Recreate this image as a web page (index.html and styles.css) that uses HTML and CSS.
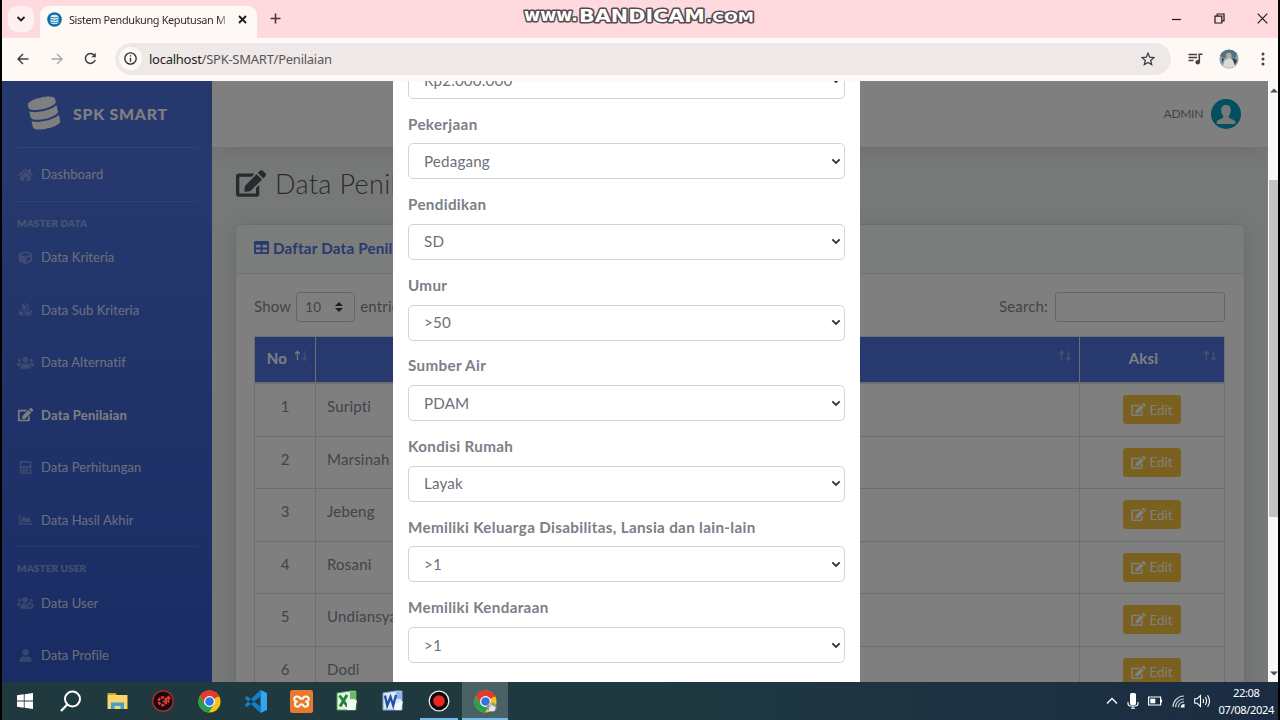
FILE: index.html
```html
<!DOCTYPE html>
<html lang="id">
<head>
<meta charset="utf-8">
<title>Sistem Pendukung Keputusan Metode SMART</title>
<link rel="stylesheet" href="styles.css">
</head>
<body>
<svg class="defs" width="0" height="0">
  <symbol id="edit" viewBox="0 0 576 512"><path d="M402.6 83.2l90.2 90.2c3.8 3.8 3.8 10 0 13.8L274.4 405.6l-92.8 10.3c-12.4 1.4-22.9-9.1-21.5-21.5l10.3-92.8L388.8 83.2c3.8-3.8 10-3.8 13.8 0zm162-22.9l-48.8-48.8c-15.2-15.2-39.9-15.2-55.2 0l-35.4 35.4c-3.8 3.8-3.8 10 0 13.8l90.2 90.2c3.8 3.8 10 3.8 13.8 0l35.4-35.4c15.2-15.3 15.2-40 0-55.2zM384 346.2V448H64V128h229.8c3.2 0 6.2-1.3 8.5-3.5l40-40c7.6-7.6 2.2-20.5-8.5-20.5H48C21.5 64 0 85.5 0 112v352c0 26.5 21.5 48 48 48h352c26.5 0 48-21.5 48-48V306.2c0-10.7-12.9-16-20.5-8.5l-40 40c-2.2 2.3-3.5 5.3-3.5 8.5z"/></symbol>
  <symbol id="database" viewBox="0 0 448 512"><path d="M448 73.143v45.714C448 159.143 347.667 192 224 192S0 159.143 0 118.857V73.143C0 32.857 100.333 0 224 0s224 32.857 224 73.143zM448 176v102.857C448 319.143 347.667 352 224 352S0 319.143 0 278.857V176c48.125 33.143 136.208 48.572 224 48.572S399.874 209.143 448 176zm0 160v102.857C448 479.143 347.667 512 224 512S0 479.143 0 438.857V336c48.125 33.143 136.208 48.572 224 48.572S399.874 369.143 448 336z"/></symbol>
  <symbol id="table" viewBox="0 0 512 512"><path d="M464 32H48C21.49 32 0 53.49 0 80v352c0 26.51 21.49 48 48 48h416c26.51 0 48-21.49 48-48V80c0-26.51-21.49-48-48-48zM224 416H64v-96h160v96zm0-160H64v-96h160v96zm224 160H288v-96h160v96zm0-160H288v-96h160v96z"/></symbol>
  <symbol id="home" viewBox="0 0 576 512"><path d="M280.37 148.26L96 300.11V464a16 16 0 0 0 16 16l112.06-.29a16 16 0 0 0 15.92-16V368a16 16 0 0 1 16-16h64a16 16 0 0 1 16 16v95.64a16 16 0 0 0 16 16.05L464 480a16 16 0 0 0 16-16V300L295.67 148.26a12.19 12.19 0 0 0-15.3 0zM571.6 251.47L488 182.56V44.05a12 12 0 0 0-12-12h-56a12 12 0 0 0-12 12v72.61L318.47 43a48 48 0 0 0-61 0L4.34 251.47a12 12 0 0 0-1.6 16.9l25.5 31A12 12 0 0 0 45.15 301l235.22-193.74a12.19 12.19 0 0 1 15.3 0L530.9 301a12 12 0 0 0 16.9-1.6l25.5-31a12 12 0 0 0-1.7-16.93z"/></symbol>
  <symbol id="cube" viewBox="0 0 512 512"><path d="M239.1 6.3l-208 78c-18.7 7-31.1 25-31.1 45v225.1c0 18.2 10.3 34.8 26.5 42.9l208 104c13.5 6.8 29.4 6.8 42.9 0l208-104c16.3-8.1 26.5-24.8 26.5-42.9V129.3c0-20-12.4-37.9-31.1-44.9l-208-78C262 2.2 250 2.2 239.1 6.3zM256 68.4l192 72v1.1l-192 78-192-78v-1.1l192-72zm32 356V275.5l160-65v133.9l-160 80z"/></symbol>
  <symbol id="cubes" viewBox="0 0 512 512"><use href="#cube" x="128" y="5" width="256" height="256"/><use href="#cube" x="0" y="240" width="256" height="256"/><use href="#cube" x="256" y="240" width="256" height="256"/></symbol>
  <symbol id="users" viewBox="0 0 640 512"><path d="M96 224c35.3 0 64-28.7 64-64s-28.7-64-64-64-64 28.7-64 64 28.7 64 64 64zm448 0c35.3 0 64-28.7 64-64s-28.7-64-64-64-64 28.7-64 64 28.7 64 64 64zm32 32h-64c-17.6 0-33.5 7.1-45.1 18.6 40.3 22.1 68.9 62 75.1 109.4h66c17.7 0 32-14.3 32-32v-32c0-35.3-28.7-64-64-64zm-256 0c61.9 0 112-50.1 112-112S381.9 32 320 32 208 82.1 208 144s50.1 112 112 112zm76.8 32h-8.3c-20.8 10-43.9 16-68.5 16s-47.6-6-68.5-16h-8.3C179.6 288 128 339.6 128 403.2V432c0 26.5 21.5 48 48 48h288c26.5 0 48-21.5 48-48v-28.8c0-63.6-51.6-115.2-115.2-115.2zm-223.7-13.4C161.5 263.1 145.6 256 128 256H64c-35.3 0-64 28.7-64 64v32c0 17.7 14.3 32 32 32h65.9c6.3-47.4 34.9-87.3 75.2-109.4z"/></symbol>
  <symbol id="users-cog" viewBox="0 0 640 512"><circle cx="96" cy="160" r="64"/><circle cx="300" cy="144" r="110"/><circle cx="544" cy="160" r="60"/><path d="M173 275C161 263 146 256 128 256H64c-35 0-64 29-64 64v32c0 18 14 32 32 32h66c6-47 35-87 75-109zM128 403c0-64 52-115 115-115h90c20 0 10 50 10 80s20 60 50 112H176c-26 0-48-21-48-48z"/><circle cx="495" cy="370" r="85" fill="none" stroke="currentColor" stroke-width="60"/><circle cx="495" cy="370" r="128" fill="none" stroke="currentColor" stroke-width="40" stroke-dasharray="67 67"/></symbol>
  <symbol id="calc" viewBox="0 0 448 512"><path fill-rule="evenodd" d="M48 0h352q48 0 48 48v416q0 48-48 48H48q-48 0-48-48V48Q0 0 48 0zM64 64v128h320V64zM64 256v64h64v-64zM192 256v64h64v-64zM320 256v192h64V256zM64 384v64h64v-64zM192 384v64h64v-64z"/></symbol>
  <symbol id="chart" viewBox="0 0 512 512"><path d="M500 384c6.6 0 12 5.4 12 12v40c0 6.600-5.400 12-12 12H12c-6.600 0-12-5.400-12-12V76c0-6.600 5.400-12 12-12h40c6.600 0 12 5.400 12 12v308h436zM372.700 159.500L288 216l-85.300-113.700c-5.100-6.800-15.500-6.300-19.900 1L96 248v104h384l-89.900-187.800c-3.200-6.500-11.400-8.700-17.400-4.700z"/></symbol>
  <symbol id="user" viewBox="0 0 448 512"><path d="M224 256c70.7 0 128-57.3 128-128S294.7 0 224 0 96 57.3 96 128s57.3 128 128 128zm89.6 32h-16.7c-22.2 10.2-46.9 16-72.9 16s-50.6-5.8-72.9-16h-16.7C60.2 288 0 348.2 0 422.4V464c0 26.5 21.5 48 48 48h352c26.5 0 48-21.5 48-48v-41.6c0-74.2-60.2-134.4-134.4-134.4z"/></symbol>
  <symbol id="sort" viewBox="0 0 14 12"><path d="M3.5 10V1.5M1.2 4L3.5 1.3 5.8 4"/><path d="M10.5 1v9M8.2 7.5l2.3 2.7 2.3-2.7"/></symbol>
  <symbol id="sort-asc" viewBox="0 0 14 12"><path d="M3.500 10V1.500M1.200 4L3.500 1.300 5.800 4"/><path opacity=".35" d="M10.500 1v9M8.200 7.500l2.300 2.700 2.300-2.700"/></symbol>
  <symbol id="caret" viewBox="0 0 10 7"><path d="M1.300 1.300L5 5l3.700-3.700" fill="none" stroke="#343438" stroke-width="1.900"/></symbol>
  <symbol id="chrome" viewBox="0 0 24 24"><circle cx="12" cy="12" r="11.5" fill="#fbc116"/><path d="M12 12L2 6.3A11.5 11.5 0 0 1 22 6.3z" fill="#e33b2e"/><path d="M2 6.3A11.5 11.5 0 0 0 11.3 23.5L17 14.5 7 14.8z" fill="#22a150"/><path d="M2 6.3L7 14.8 9 7H22.2A11.5 11.5 0 0 0 2 6.3z" fill="#e33b2e"/><circle cx="12" cy="12" r="5.7" fill="#fff"/><circle cx="12" cy="12" r="4.5" fill="#2f75e8"/></symbol>
</svg>

<div class="screen">
  <header class="tabstrip">
    <div class="tab-search"><svg width="10" height="8" viewBox="0 0 10 8"><path d="M1.5 2L5 5.5 8.5 2" fill="none" stroke="#1c1a1b" stroke-width="1.8"/></svg></div>
    <div class="tab">
      <svg width="15" height="15" viewBox="0 0 15 15"><circle cx="7.5" cy="7.5" r="7.3" fill="#0e6da8"/><path d="M3.5 4q4-2.5 8 0v7q-4 2.5-8 0z" fill="#d9eef8"/><path d="M3.5 5.2q4 1.5 8 0M3.5 7.6q4 1.5 8 0M3.5 10q4 1.5 8 0" fill="none" stroke="#0e6da8" stroke-width=".8"/></svg>
      <span class="tab-title">Sistem Pendukung Keputusan M</span>
      <svg width="9" height="9" viewBox="0 0 9 9"><path d="M1 1l7 7M8 1L1 8" stroke="#1c1a1b" stroke-width="1.8"/></svg>
    </div>
    <svg class="plus" width="11" height="11" viewBox="0 0 11 11"><path d="M5.5 .5v10M.5 5.5h10" stroke="#4a3438" stroke-width="1.6"/></svg>
    <svg class="watermark" width="240" height="28" viewBox="0 0 240 28">
      <text x="3" y="20.500" font-size="17" textLength="54" lengthAdjust="spacingAndGlyphs">www.</text>
      <text x="58" y="22" font-size="18.500" textLength="126" lengthAdjust="spacingAndGlyphs">BANDICAM</text>
      <text x="185" y="21.500" font-size="14" textLength="48" lengthAdjust="spacingAndGlyphs">.COM</text>
    </svg>
    <div class="win-controls">
      <svg width="11" height="11" viewBox="0 0 11 11"><path d="M1 6.5h9" stroke="#1c1a1b" stroke-width="1.2"/></svg>
      <svg width="11" height="11" viewBox="0 0 11 11"><path d="M1 3.2h6.8V10H1zM3.2 3V1H10v6.8H8" fill="none" stroke="#1c1a1b" stroke-width="1.2"/></svg>
      <svg width="11" height="11" viewBox="0 0 11 11"><path d="M.7 .7l9.6 9.6M10.3 .7L.7 10.3" stroke="#1c1a1b" stroke-width="1.2"/></svg>
    </div>
  </header>

  <div class="toolbar">
    <svg width="12" height="12" viewBox="0 0 12 12"><path d="M11.5 6H1.2M6 1L1 6l5 5" fill="none" stroke="#443f40" stroke-width="1.5"/></svg>
    <svg class="fwd" width="12" height="12" viewBox="0 0 12 12"><path d="M.5 6h10.3M6 1l5 5-5 5" fill="none" stroke="#aaa5a5" stroke-width="1.4"/></svg>
    <svg class="reload" width="13" height="13" viewBox="0 0 13 13"><path d="M11.2 8A5 5 0 1 1 10.3 3.2" fill="none" stroke="#443f40" stroke-width="1.5"/><path d="M11.8 .8V5.2H7.4z" fill="#443f40"/></svg>
    <div class="omnibox">
      <span class="info"><svg width="13" height="13" viewBox="0 0 13 13"><circle cx="6.5" cy="6.5" r="5.7" fill="none" stroke="#2c2829" stroke-width="1.3"/><path d="M6.5 5.7v4M6.5 3.2v1.3" stroke="#2c2829" stroke-width="1.3"/></svg></span>
      <span class="url">localhost<i>/SPK-SMART/Penilaian</i></span>
      <svg width="14" height="14" viewBox="0 0 14 14"><path d="M7 1.2l1.7 4 4.3.4-3.3 2.8 1 4.2L7 10.4l-3.7 2.2 1-4.2L1 5.6l4.300-.4z" fill="none" stroke="#443f40" stroke-width="1.3"/></svg>
    </div>
    <svg class="music" width="15" height="12" viewBox="0 0 15 12"><path d="M.5 1.5h8.500M.5 4.500h8.500M.5 7.500h5M11.300 9.500V1.300H14.500" fill="none" stroke="#443f40" stroke-width="1.600"/><circle cx="9.700" cy="9.300" r="2.200" fill="#443f40"/></svg>
    <svg class="avatar" width="20" height="20" viewBox="0 0 20 20"><circle cx="10" cy="10" r="9.600" fill="#8aa1a5"/><path d="M1 7a9.600 9.600 0 0 1 17-2l-2 5-5-3-6 2z" fill="#50757f"/><path d="M4 17l2-6 4-2 4 2 2 6q-6 4-12 0z" fill="#dadbd8"/><circle cx="9.800" cy="6.500" r="2.800" fill="#b9a79d"/><path d="M13 9l5 2-2 5zM3 9l2 1-2 4z" fill="#303c42"/></svg>
    <svg class="dots" width="4" height="14" viewBox="0 0 4 14"><circle cx="2" cy="2" r="1.5"/><circle cx="2" cy="7" r="1.5"/><circle cx="2" cy="12" r="1.5"/></svg>
  </div>

  <div class="viewport">
    <div class="app">
      <nav class="sidebar">
        <div class="brand"><svg class="logo" width="30" height="32"><use href="#database"/></svg><b>SPK SMART</b></div>
        <hr>
        <a class="item"><svg><use href="#home"/></svg>Dashboard</a>
        <hr>
        <div class="heading">MASTER DATA</div>
        <a class="item"><svg><use href="#cube"/></svg>Data Kriteria</a>
        <a class="item"><svg><use href="#cubes"/></svg>Data Sub Kriteria</a>
        <a class="item"><svg><use href="#users"/></svg>Data Alternatif</a>
        <a class="item active"><svg><use href="#edit"/></svg>Data Penilaian</a>
        <a class="item"><svg><use href="#calc"/></svg>Data Perhitungan</a>
        <a class="item"><svg><use href="#chart"/></svg>Data Hasil Akhir</a>
        <hr>
        <div class="heading">MASTER USER</div>
        <a class="item"><svg><use href="#users-cog"/></svg>Data User</a>
        <a class="item"><svg><use href="#user"/></svg>Data Profile</a>
        <hr>
      </nav>
      <div class="content">
        <div class="topbar"><span>ADMIN</span>
          <svg width="30" height="30" viewBox="0 0 30 30"><circle cx="15" cy="15" r="15" fill="#02a0c2"/><path d="M15 6c3.3 0 5 2.2 4.8 5.5-.1 2.600-.9 4.400-2.100 5.500 0 1.600.5 2.200 2 2.800 2.600 1 4.800 1.600 4.800 3.700 0 1-.5 1.400-1.500 1.400H7c-1 0-1.500-.4-1.500-1.400 0-2.100 2.200-2.700 4.800-3.700 1.500-.6 2-1.200 2-2.800-1.200-1.100-2-2.900-2.100-5.500C10 8.200 11.700 6 15 6z" fill="#f0f0f0"/></svg>
        </div>
        <main>
          <h1><svg width="30" height="27"><use href="#edit"/></svg>Data Penilaian</h1>
          <section class="card">
            <div class="card-head"><svg width="15" height="15"><use href="#table"/></svg>Daftar Data Penilaian</div>
            <div class="card-body">
              <div class="controls">
                <span class="txt">Show</span>
                <span class="length">10<svg width="8" height="10" viewBox="0 0 8 10"><path d="M0 4l4-4 4 4zM0 6l4 4 4-4z" fill="#3a3b45"/></svg></span>
                <span class="txt">entries</span>
                <span class="txt search-label">Search:</span><span class="search"></span>
              </div>
              <div class="grid">
                <div class="row head"><div class="no">No<svg class="sort asc"><use href="#sort-asc"/></svg></div><div class="name">Nama Alternatif<svg class="sort"><use href="#sort"/></svg></div><div class="aksi">Aksi<svg class="sort"><use href="#sort"/></svg></div></div>
                <div class="row"><div class="no">1</div><div class="name">Suripti</div><div class="aksi"><span class="btn"><svg><use href="#edit"/></svg>Edit</span></div></div>
                <div class="row"><div class="no">2</div><div class="name">Marsinah</div><div class="aksi"><span class="btn"><svg><use href="#edit"/></svg>Edit</span></div></div>
                <div class="row"><div class="no">3</div><div class="name">Jebeng</div><div class="aksi"><span class="btn"><svg><use href="#edit"/></svg>Edit</span></div></div>
                <div class="row"><div class="no">4</div><div class="name">Rosani</div><div class="aksi"><span class="btn"><svg><use href="#edit"/></svg>Edit</span></div></div>
                <div class="row"><div class="no">5</div><div class="name">Undiansyah</div><div class="aksi"><span class="btn"><svg><use href="#edit"/></svg>Edit</span></div></div>
                <div class="row"><div class="no">6</div><div class="name">Dodi</div><div class="aksi"><span class="btn"><svg><use href="#edit"/></svg>Edit</span></div></div>
              </div>
            </div>
          </section>
        </main>
      </div>
    </div>
    <div class="scrollbar"><svg width="8" height="5" viewBox="0 0 8 5"><path d="M0 4.500L4 .5l4 4z" fill="#505050"/></svg><div class="thumb"></div><svg width="8" height="5" viewBox="0 0 8 5"><path d="M0 .5l4 4 4-4z" fill="#505050"/></svg></div>
    <div class="backdrop">
      <div class="modal">
        <div class="field"><label></label><div class="select">Rp2.000.000<svg><use href="#caret"/></svg></div></div>
        <div class="field"><label>Pekerjaan</label><div class="select">Pedagang<svg><use href="#caret"/></svg></div></div>
        <div class="field"><label>Pendidikan</label><div class="select">SD<svg><use href="#caret"/></svg></div></div>
        <div class="field"><label>Umur</label><div class="select">&gt;50<svg><use href="#caret"/></svg></div></div>
        <div class="field"><label>Sumber Air</label><div class="select">PDAM<svg><use href="#caret"/></svg></div></div>
        <div class="field"><label>Kondisi Rumah</label><div class="select">Layak<svg><use href="#caret"/></svg></div></div>
        <div class="field"><label>Memiliki Keluarga Disabilitas, Lansia dan lain-lain</label><div class="select">&gt;1<svg><use href="#caret"/></svg></div></div>
        <div class="field"><label>Memiliki Kendaraan</label><div class="select">&gt;1<svg><use href="#caret"/></svg></div></div>
      </div>
    </div>
  </div>

  <footer class="taskbar">
    <div class="app-slot"><svg width="16" height="16" viewBox="0 0 16 16"><path d="M0 2.300l6.800-1v6.300H0zM7.600 1.200L16 0v7.600H7.600zM0 8.400h6.800v6.300L0 13.700zM7.600 8.400H16V16l-8.400-1.200z" fill="#fff"/></svg></div>
    <div class="app-slot"><svg width="22" height="22" viewBox="0 0 22 22"><circle cx="12.500" cy="9" r="7.500" fill="none" stroke="#fff" stroke-width="2"/><path d="M7.300 14.500L1 21" stroke="#fff" stroke-width="2.400"/></svg></div>
    <div class="app-slot"><svg width="21" height="18" viewBox="0 0 21 18"><path d="M.5 1h8l1.500 2h-9.500z" fill="#dd9b1c"/><path d="M.5 3h20v14H.5z" fill="#f9d567"/><path d="M4 17v-6.500h13V17h-3.500v-3h-6v3z" fill="#3fa0d4"/></svg></div>
    <div class="app-slot"><svg width="22" height="22" viewBox="0 0 22 22"><circle cx="11" cy="11" r="10.200" fill="#180b0d" stroke="#b92a2b" stroke-width="1.200"/><circle cx="10.500" cy="11.300" r="3.800" fill="none" stroke="#e73732" stroke-width="2.600" stroke-dasharray="3 1"/><path d="M10.500 11.500h3M16.500 13V7M14.500 9l2-2.500 2 2.500" fill="none" stroke="#e73732" stroke-width="1.500"/></svg></div>
    <div class="app-slot"><svg width="23" height="23"><use href="#chrome"/></svg></div>
    <div class="app-slot"><svg width="23" height="23" viewBox="0 0 23 23"><path d="M16.500 0L23 3v17l-6.500 3z" fill="#2fa6ee"/><path d="M16.500 0v6.500L3 17 .5 15zM16.500 23v-6.500L3 6 .5 8z" fill="#1180c9"/></svg></div>
    <div class="app-slot"><svg width="23" height="23" viewBox="0 0 23 23"><rect width="23" height="23" rx="2.500" fill="#e77a2c"/><path d="M7.500 6.500a2.600 2.600 0 1 0 0 5 2.600 2.600 0 1 0 2.500 3.500q1.500-1.500 3 0a2.600 2.600 0 1 0 2.500-3.500 2.600 2.600 0 1 0 0-5q-2 0-2.500 2h-3q-.5-2-2.500-2z" fill="none" stroke="#fff" stroke-width="2"/></svg></div>
    <div class="app-slot"><svg width="22" height="22" viewBox="0 0 22 22"><path d="M1 3L14 1h6v19H1z" fill="#e4f3e1" stroke="#44a049"/><path d="M14 2h6v7h-6z" fill="#69bb65"/><path d="M3.500 5.500l8 11M11 5L4 16.500" stroke="#218039" stroke-width="2.800"/><path d="M11 13l10-3-2 10h-8z" fill="#f4f9f1"/></svg></div>
    <div class="app-slot"><svg width="22" height="22" viewBox="0 0 22 22"><path d="M1 3L14 1h6v19H1z" fill="#dbe8f8" stroke="#7fa3d8"/><path d="M14 2h6v7h-6z" fill="#91b5e8"/><path d="M3 5.500l2.200 10L8.500 7l2.700 8.500L14 5" fill="none" stroke="#214e9e" stroke-width="2.300"/><path d="M13 14l8-3-2 9h-6z" fill="#f4f7fc"/></svg></div>
    <div class="app-slot running"><svg width="22" height="22" viewBox="0 0 22 22"><circle cx="11" cy="11" r="9.800" fill="#080808" stroke="#e8eded" stroke-width="1.300"/><circle cx="11" cy="11" r="5.800" fill="#ec2424"/></svg></div>
    <div class="app-slot focused"><svg width="23" height="23" viewBox="0 0 24 24"><use href="#chrome"/><circle cx="18.500" cy="18" r="5" fill="#8a9792"/><path d="M15 22l1.500-5 3-1 3 2-1 4z" fill="#e6e5df"/><circle cx="17" cy="15" r="1.800" fill="#c8bdb0"/></svg></div>
    <div class="tray">
      <svg width="12" height="8" viewBox="0 0 12 8"><path d="M1 6.500l5-5 5 5" fill="none" stroke="#fff" stroke-width="1.300"/></svg>
      <svg width="12" height="16" viewBox="0 0 12 16"><rect x="3" width="6" height="12" rx="1.500" fill="#fff"/><path d="M1 9v1.500Q1 13 3.500 13h5q2.500 0 2.500-2.500V9M4 15.300h4M6 13v2" fill="none" stroke="#fff" stroke-width="1.100"/></svg>
      <svg width="15" height="10" viewBox="0 0 15 10"><path d="M.6 1h12v8H.6zM13.500 3.500v3" fill="none" stroke="#fff" stroke-width="1.200"/><path d="M2.300 2.700h5v4.600h-5z" fill="#fff"/></svg>
      <svg width="13" height="13" viewBox="0 0 13 13"><path d="M1 12A11 11 0 0 1 12 1M3.500 12.300A8.500 8.500 0 0 1 12 4M6.200 12.300A6 6 0 0 1 12 6.800" fill="none" stroke="#c7ced5" stroke-width="1.200"/><path d="M8.500 12.500A4 4 0 0 1 12.500 9v3.500z" fill="#fff"/></svg>
      <svg width="17" height="14" viewBox="0 0 17 14"><path d="M.7 4.700h2.500L6.500 1.500v11L3.200 9.300H.7zM9 5q1.200 2 0 4M11.300 3q2.500 4 0 8M13.600 1.200q3.800 5.800 0 11.600" fill="none" stroke="#fff" stroke-width="1.100"/></svg>
      <div class="clock"><span>22:08</span><span>07/08/2024</span></div>
    </div>
  </footer>
</div>
</body>
</html>
```
FILE: styles.css
```css
* { box-sizing: border-box; }
body { margin: 0; background: #000; font-family: Lato, "Open Sans", sans-serif; }
.defs { position: absolute; }
svg { flex: none; }
hr { border: 0; margin: 0 15px; height: 1px; background: rgba(255,255,255,.15); flex: none; }

.screen { width: 1280px; height: 720px; display: flex; flex-direction: column; overflow: hidden; padding: 0 2px; }

/* browser window */
.tabstrip { height: 38px; flex: none; background: #fed9de; display: flex; position: relative; font-family: "Noto Sans", sans-serif; }
.tab-search { width: 26px; height: 26px; margin: 6px 6px 0; border-radius: 9px; background: #fff0f1; display: flex; align-items: center; justify-content: center; }
.tab { width: 217px; height: 32px; margin-top: 6px; padding: 0 10px 5px 7px; background: #fff9f6; border-radius: 9px 9px 0 0; display: flex; align-items: center; gap: 7px; }
.tab-title { flex: 1; font-size: 10.900px; letter-spacing: -.36px; color: #33292b; white-space: nowrap; -webkit-mask-image: linear-gradient(90deg, #000 92%, transparent 100%); }
.plus { margin: 13px 0 0 13px; }
.watermark { position: absolute; left: 519px; top: 0; }
.watermark text { font-family: "DejaVu Sans", sans-serif; font-weight: 700; fill: #fff; stroke: #554a4c; stroke-width: 3px; paint-order: stroke; stroke-linejoin: round; }
.win-controls { margin: 13px 10px 0 auto; display: flex; gap: 32px; }
.toolbar { height: 43px; flex: none; background: #fff9f6; display: flex; align-items: center; padding: 0 13px 2px 15px; }
.fwd { margin-left: 22px; }
.reload { margin-left: 21px; }
.omnibox { margin-left: 18px; width: 1056px; height: 32px; border-radius: 16px; background: #efe8e9; display: flex; align-items: center; padding: 0 16px 0 4px; }
.info { width: 23px; height: 23px; border-radius: 50%; background: #fff9f6; display: flex; align-items: center; justify-content: center; }
.url { flex: 1; margin-left: 7px; font: 13px "Noto Sans", sans-serif; letter-spacing: -.26px; color: #231f20; }
.url i { font-style: normal; color: #5b5355; }
.music { margin-left: 17px; }
.avatar { margin-left: 16px; }
.dots { margin-left: auto; fill: #443f40; }

/* page */
.viewport { height: 601px; flex: none; display: flex; position: relative; overflow: hidden; }
.app { flex: 1; display: flex; background: #eff3f3; min-width: 0; }
.sidebar { width: 210px; flex: none; height: 780px; display: flex; flex-direction: column; background: linear-gradient(180deg, #4d72de 10%, #2850bf 100%); color: #fff; }
.brand { height: 66px; flex: none; display: flex; align-items: center; gap: 14px; padding: 0 0 2px 27px; font-size: 15.800px; letter-spacing: .8px; }
.brand b { font-weight: 900; }
.logo { transform: rotate(-13deg); fill: #fff; }
.item { height: 52.5px; flex: none; display: flex; align-items: center; gap: 7px; padding-left: 15px; font-size: 13px; letter-spacing: .04px; color: rgba(255,255,255,.8); }
.item svg { width: 17px; height: 13.500px; fill: currentColor; color: rgba(255,255,255,.3); }
.item.active { font-weight: 700; color: #fff; letter-spacing: .2px; }
.item.active svg { color: #fff; }
.heading { height: 29.500px; flex: none; padding: 12px 15px 0; font-size: 10px; line-height: 18px; letter-spacing: .08px; font-weight: 800; color: rgba(255,255,255,.4); }
.content { flex: 1; min-width: 0; }
.topbar { height: 66px; background: #fff; box-shadow: 0 2px 26px rgba(58,59,69,.15); display: flex; align-items: center; justify-content: flex-end; gap: 8px; padding-right: 27px; font-size: 12px; letter-spacing: -.3px; color: #858796; }
.topbar span { padding-bottom: 2px; }
main { padding: 20px 24px; }
h1 { margin: 0 0 24px; height: 34px; display: flex; align-items: center; gap: 9px; font-size: 27px; font-weight: 300; letter-spacing: .35px; color: #52545f; fill: currentColor; padding-bottom: 1px; }
.card { height: 600px; background: #fff; border-radius: 5px; box-shadow: 0 2px 26px rgba(58,59,69,.15), 0 0 0 1px #e3e6f0; }
.card-head { height: 49px; background: #f6faf9; border-bottom: 1px solid #dfe4e8; border-radius: 5px 5px 0 0; display: flex; align-items: center; gap: 4px; padding: 0 18px 3px; font-size: 15.200px; letter-spacing: .2px; font-weight: 700; color: #4e73df; fill: currentColor; }
.card-body { padding: 18px 19px; color: #858796; font-size: 15px; }
.controls { height: 30px; margin: 0 0 14px -1px; display: flex; align-items: center; gap: 5px; letter-spacing: .17px; }
.txt { padding-bottom: 3px; }
.length { width: 59px; height: 30px; border: 1px solid #c6cad8; border-radius: 4px; display: flex; align-items: center; justify-content: space-between; padding: 0 11px 0 8px; font-size: 13.500px; }
.search-label { margin-left: auto; }
.search { width: 170px; height: 30px; border: 1px solid #c6cad8; border-radius: 3px; margin-left: 2px; }
.grid { border: 1px solid #d8dde4; margin-left: -1px; }
.row { display: flex; height: 52.500px; border-bottom: 1px solid #d8dde4; }
.row > div { position: relative; display: flex; align-items: center; border-left: 1px solid #d8dde4; }
.row > div:first-child { border-left: 0; }
.row .no { width: 60px; justify-content: center; padding-bottom: 7px; }
.row .name { flex: 1; padding: 0 11px 7px; letter-spacing: .2px; }
.row .aksi { width: 145px; justify-content: center; }
.row.head { height: 47px; background: #4e73df; color: #fff; font-weight: 700; border-bottom: 2px solid #d8dde4; }
.row.head > div { letter-spacing: .2px; }
.row.head .no { padding: 0 16px 3px 0; }
.row.head .name { justify-content: center; }
.row.head .aksi { padding: 0 17px 3px 0; }
.sort { position: absolute; right: 7px; top: 13px; width: 14px; height: 12px; fill: none; stroke: #fff; stroke-width: 1.200; opacity: .35; }
.sort.asc { opacity: .9; }
.btn { width: 58px; height: 29px; border-radius: 3px; background: #f6c23e; color: #fff; fill: #fff; display: flex; align-items: center; justify-content: center; gap: 3px; font-size: 13.500px; }
.btn svg { width: 15px; height: 13px; }
.scrollbar { width: 10px; flex: none; background: #f7f7f7; border-left: 1px solid #fff; display: flex; flex-direction: column; align-items: center; padding: 7px 0 6px; position: relative; z-index: 3; }
.thumb { width: 9px; height: 337px; margin: 87px 0 auto; background: #c1c2c2; }

/* modal over the page */
.backdrop { position: absolute; inset: 0 10px 0 0; background: rgba(0,0,0,.5); display: flex; justify-content: center; padding-right: 17px; }
.modal { width: 467px; height: 601px; overflow: hidden; background: #fff; padding: 0 15px; color: #6e707a; font-size: 15.200px; letter-spacing: .15px; }
.field { height: 80.650px; }
.field:first-child { margin-top: -49.100px; }
.field label { display: block; height: 30.700px; line-height: 23.600px; font-weight: 700; letter-spacing: .34px; color: #7c7e88; }
.select { height: 36px; border: 1px solid #d1d3db; border-radius: 5px; display: flex; align-items: center; justify-content: space-between; padding: 0 3px 1px 15px; }
.select svg { width: 10px; height: 7px; margin-top: 1px; }

/* desktop */
.taskbar { height: 38px; flex: none; background: linear-gradient(90deg, #20393e, #1f3940 50%, #1b2c42); display: flex; }
.app-slot { width: 46px; display: flex; align-items: center; justify-content: center; }
.running { border-bottom: 2px solid #76b9ed; padding-top: 2px; width: 38px; margin: 0 4px; }
.focused { border-bottom: 2px solid #76b9ed; padding-top: 2px; background: #4a6166; }
.tray { margin-left: auto; display: flex; align-items: center; gap: 9px; padding-right: 4px; }
.clock { margin-left: -2px; display: flex; flex-direction: column; align-items: center; color: #fff; font: 11.200px/17px "Noto Sans", sans-serif; letter-spacing: -.4px; padding-bottom: 1px; }
```
